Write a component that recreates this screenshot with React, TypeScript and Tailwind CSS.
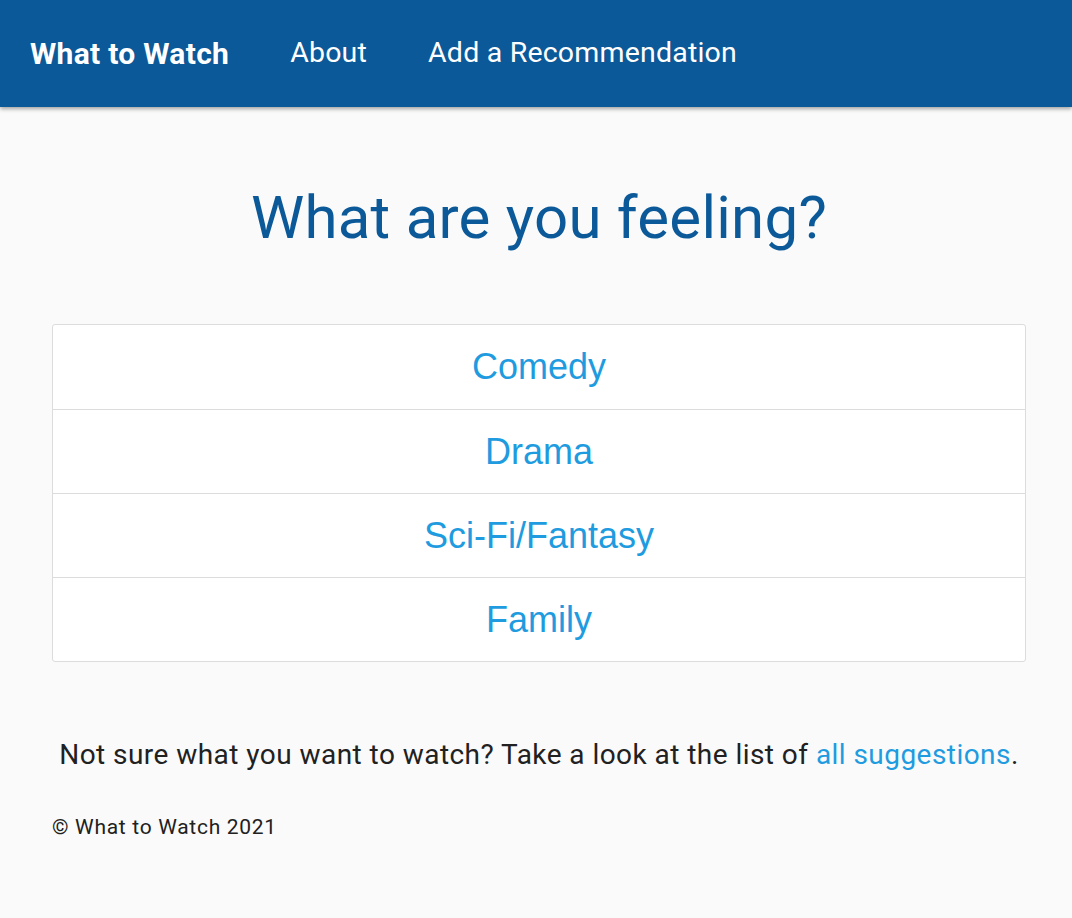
import type { ReactNode } from "react";

const genres = ["Comedy", "Drama", "Sci-Fi/Fantasy", "Family"];

export default function App() {
	return (
		<div className="min-h-[918px] bg-[#fafafa] font-['Roboto',sans-serif]">
			<header className="h-[107px] bg-[#0b5999] flex items-center px-[30px] shadow-[0_2px_4px_rgba(0,0,0,0.35)]">
				<NavLink bold>What to Watch</NavLink>
				<NavLink>About</NavLink>
				<NavLink>Add a Recommendation</NavLink>
			</header>
			<main className="pl-[52px] pb-10">
				<h1 className="text-[60px] leading-none text-[#0b5999] text-center tracking-[0.25px] w-[974px] pt-[81px] pb-[76px]">
					What are you feeling?
				</h1>
				<ul className="w-[974px] bg-white border border-[#dcdcdc] rounded-[3px] font-['Liberation_Sans',Arial,sans-serif]">
					{genres.map((g, i) => (
						<li
							key={g}
							className={
								"h-[84px] flex items-center justify-center text-[36px] text-[#1f9be0] " +
								(i > 0 ? "border-t border-[#dcdcdc]" : "")
							}
						>
							<a href="#">{g}</a>
						</li>
					))}
				</ul>
				<p className="w-[974px] text-center text-[28px] text-[#212121] tracking-[0.45px] mt-[72px]">
					Not sure what you want to watch? Take a look at the list of{" "}
					<a href="#" className="text-[#1f9be0]">
						all suggestions
					</a>
					.
				</p>
				<p className="text-[21px] text-[#212121] tracking-[0.7px] mt-[36px]">© What to Watch 2021</p>
			</main>
		</div>
	);
}

function NavLink({ children, bold }: { children: ReactNode; bold?: boolean }) {
	return (
		<a
			href="#"
			className={
				"text-white mr-[61px] " +
				(bold ? "font-bold text-[30px] tracking-[0.3px]" : "font-normal text-[28.5px] tracking-[0.2px]")
			}
		>
			{children}
		</a>
	);
}
